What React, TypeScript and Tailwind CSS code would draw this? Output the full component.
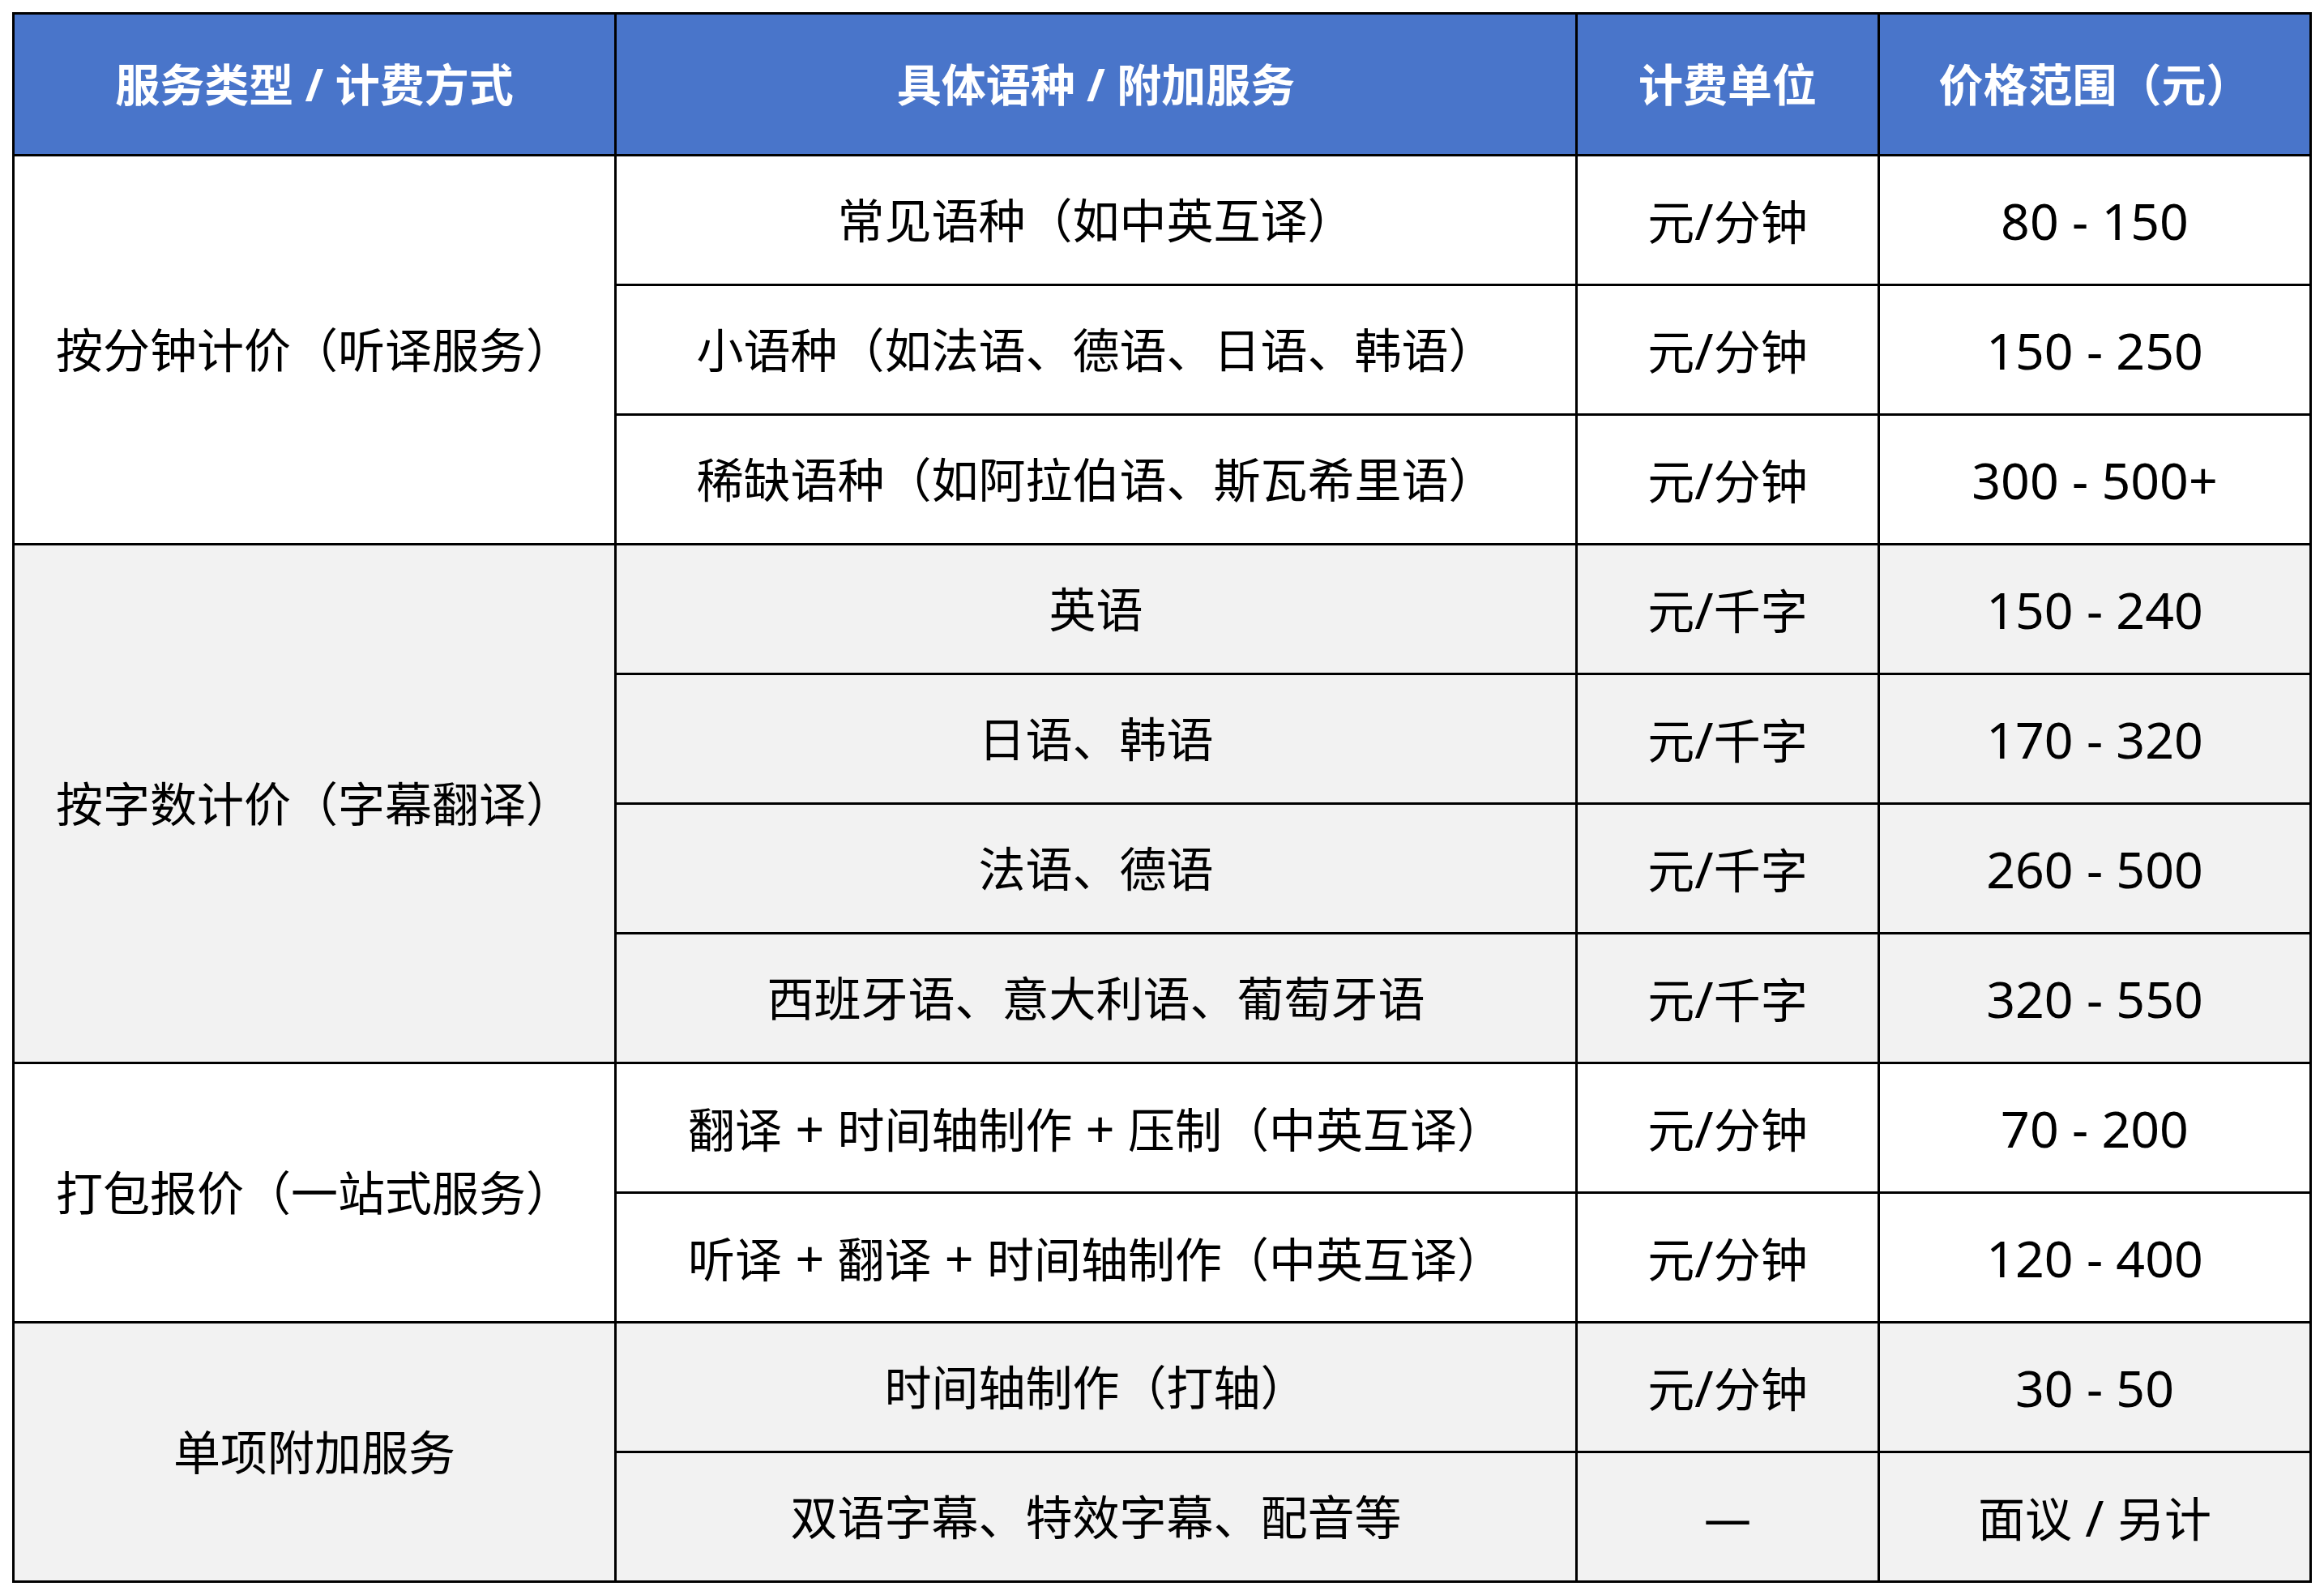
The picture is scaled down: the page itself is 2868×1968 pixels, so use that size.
import React from "react";

type Row = { item: string; unit: string; price: string };
type Group = { name: string; gray: boolean; rows: Row[] };

const groups: Group[] = [
  {
    name: "按分钟计价（听译服务）",
    gray: false,
    rows: [
      { item: "常见语种（如中英互译）", unit: "元/分钟", price: "80 - 150" },
      { item: "小语种（如法语、德语、日语、韩语）", unit: "元/分钟", price: "150 - 250" },
      { item: "稀缺语种（如阿拉伯语、斯瓦希里语）", unit: "元/分钟", price: "300 - 500+" },
    ],
  },
  {
    name: "按字数计价（字幕翻译）",
    gray: true,
    rows: [
      { item: "英语", unit: "元/千字", price: "150 - 240" },
      { item: "日语、韩语", unit: "元/千字", price: "170 - 320" },
      { item: "法语、德语", unit: "元/千字", price: "260 - 500" },
      { item: "西班牙语、意大利语、葡萄牙语", unit: "元/千字", price: "320 - 550" },
    ],
  },
  {
    name: "打包报价（一站式服务）",
    gray: false,
    rows: [
      { item: "翻译 + 时间轴制作 + 压制（中英互译）", unit: "元/分钟", price: "70 - 200" },
      { item: "听译 + 翻译 + 时间轴制作（中英互译）", unit: "元/分钟", price: "120 - 400" },
    ],
  },
  {
    name: "单项附加服务",
    gray: true,
    rows: [
      { item: "时间轴制作（打轴）", unit: "元/分钟", price: "30 - 50" },
      { item: "双语字幕、特效字幕、配音等", unit: "—", price: "面议 / 另计" },
    ],
  },
];

const headers = ["服务类型 / 计费方式", "具体语种 / 附加服务", "计费单位", "价格范围（元）"];

const cell = "border-r-[3px] border-b-[3px] border-black text-center align-middle p-0";

// latin runs come out a bit bigger in the original font, bump them
const Txt = ({ s }: { s: string }) => (
  <>
    {s.split(/([\x20-\x7e]+)/).map((p, i) =>
      /^[\x20-\x7e]+$/.test(p) ? (
        <span key={i} className="text-[1.08em]">
          {p}
        </span>
      ) : (
        p
      )
    )}
  </>
);

export default function App() {
  return (
    <div className="min-h-screen bg-white p-[15px] font-['Noto_Sans','Noto_Sans_CJK_SC',sans-serif] text-black">
      <table className="w-[2838px] table-fixed border-separate border-spacing-0 border-l-[3px] border-t-[3px] border-black">
        <colgroup>
          <col className="w-[743px]" />
          <col className="w-[1186px]" />
          <col className="w-[373px]" />
          <col className="w-[533px]" />
        </colgroup>
        <thead>
          <tr className="h-[175px] bg-[#4975ca]">
            {headers.map((h) => (
              <th key={h} className={`${cell} text-[55px] font-bold text-white`}>
                {h}
              </th>
            ))}
          </tr>
        </thead>
        <tbody>
          {groups.map((g) =>
            g.rows.map((r, i) => (
              <tr key={g.name + i} className={`h-[160px] ${g.gray ? "bg-[#f2f2f2]" : "bg-white"}`}>
                {i === 0 && (
                  <td rowSpan={g.rows.length} className={`${cell} text-[58px]`}>
                    {g.name}
                  </td>
                )}
                <td className={`${cell} text-[58px]`}>
                  <Txt s={r.item} />
                </td>
                <td className={`${cell} text-[58px]`}>
                  <Txt s={r.unit} />
                </td>
                <td className={`${cell} text-[58px]`}>
                  <Txt s={r.price} />
                </td>
              </tr>
            ))
          )}
        </tbody>
      </table>
    </div>
  );
}
